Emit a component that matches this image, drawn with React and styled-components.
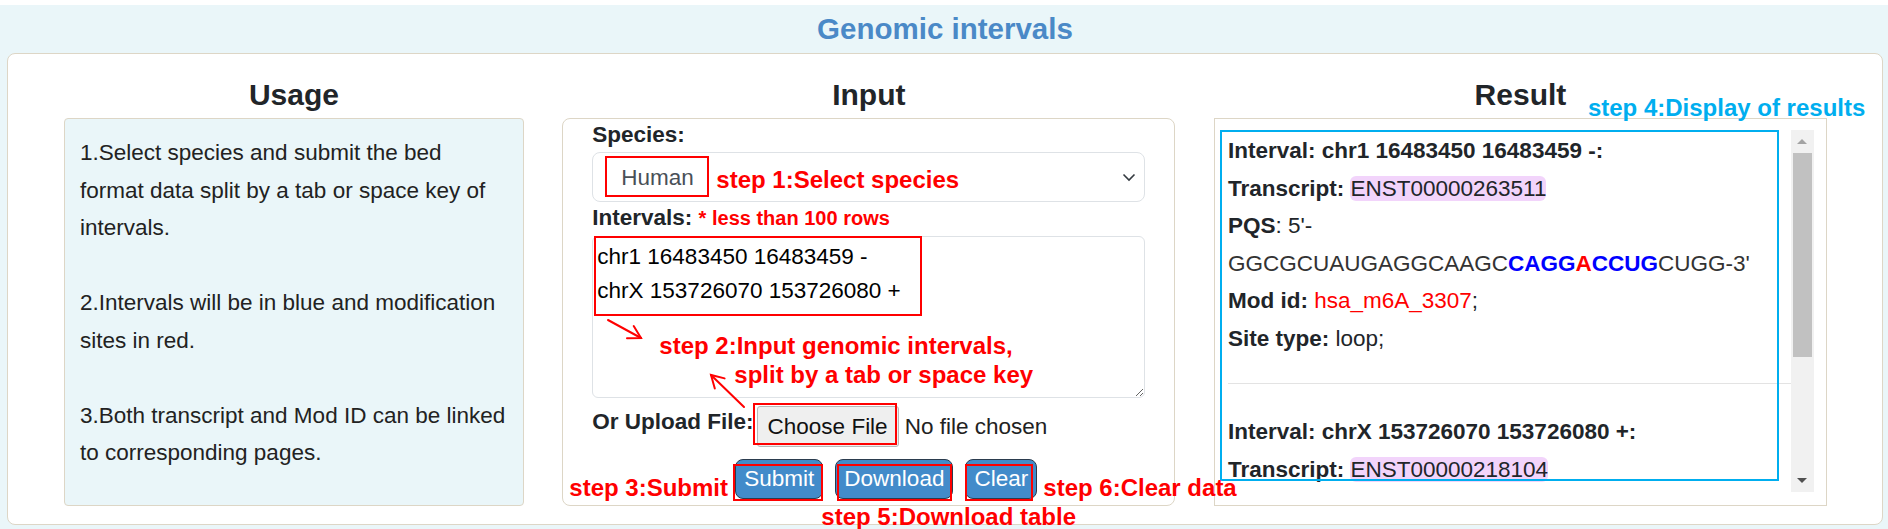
import React from "react";
import styled, { createGlobalStyle } from "styled-components";

const GlobalStyle = createGlobalStyle`
  * { box-sizing: border-box; }
  html, body { overflow: hidden; }
  body {
    margin: 0;
    background: #fff;
    font-family: "Liberation Sans", Arial, sans-serif;
    color: #212529;
  }
`;

const Page = styled.div`
  padding-top: 5px;
`;

const Shell = styled.div`
  background: #eaf6f9;
  padding: 0 5px 4px 7px;
`;

const Title = styled.h2`
  margin: 0;
  height: 48px;
  display: flex;
  align-items: center;
  justify-content: center;
  font-size: 29.5px;
  font-weight: 700;
  color: #4a89c7;
`;

const Panel = styled.div`
  background: #fff;
  border: 1px solid #ddd6c6;
  border-radius: 8px;
  padding: 23px 55px 18px 56px;
  display: grid;
  grid-template-columns: 3fr 4fr 4fr;
  column-gap: 38.5px;
`;

const Column = styled.section`
  display: flex;
  flex-direction: column;
  min-width: 0;
`;

const Heading = styled.h3`
  margin: 0 0 5px;
  font-size: 30px;
  line-height: 36px;
  font-weight: 700;
  text-align: center;
  color: #212529;
`;

const UsageBox = styled.div`
  flex: 1;
  background: #eaf6f9;
  border: 1px solid #ddd6c6;
  border-radius: 4px;
  padding: 15px;
  font-size: 22.5px;
  line-height: 37.5px;
  color: #222;

  p {
    margin: 0 0 37.5px;
  }
  p:last-child {
    margin-bottom: 0;
  }
`;

const InputBox = styled.div`
  flex: 1;
  position: relative;
  display: flex;
  flex-direction: column;
  border: 1px solid #ddd6c6;
  border-radius: 8px;
  padding: 3px 29px 6px;
`;

const FieldLabel = styled.label`
  display: block;
  margin-top: ${(p) => p.$gap || 0}px;
  font-size: 22.5px;
  line-height: 26px;
  font-weight: 700;
  color: #212529;
`;

const Note = styled.span`
  font-size: 20px;
  color: #ff0000;
`;

const SelectWrap = styled.div`
  position: relative;
  margin-top: 4px;
`;

const Select = styled.select`
  appearance: none;
  width: 100%;
  height: 50px;
  border: 1px solid #dee2e6;
  border-radius: 8px;
  background: #fff;
  padding: 0 0 0 28px;
  font: 22.5px "Liberation Sans", Arial, sans-serif;
  color: #495057;
`;

const Chevron = styled.svg`
  position: absolute;
  right: 9px;
  top: 21px;
  pointer-events: none;
`;

const IntervalArea = styled.textarea`
  display: block;
  margin-top: 5px;
  width: 100%;
  height: 162px;
  border: 1px solid #dee2e6;
  border-radius: 6px;
  padding: 3px 4px;
  font: 22.5px/34px "Liberation Sans", Arial, sans-serif;
  color: #000;
  resize: vertical;
`;

const UploadRow = styled.div`
  margin-top: 8px;
  display: flex;
  align-items: flex-start;
  gap: 3px;
`;

const UploadLabel = styled.span`
  flex-shrink: 0;
  white-space: nowrap;
  padding-top: 3px;
  font-size: 22.5px;
  line-height: 26px;
  font-weight: 700;
`;

const FileInput = styled.input`
  flex: 1;
  min-width: 0;
  font: 22.5px/26px "Liberation Sans", Arial, sans-serif;
  color: #222;

  &::file-selector-button {
    font: inherit;
    height: 41px;
    padding: 0 10px;
    margin-right: 6px;
    background: #efefef;
    border: 1px solid #b8b8b8;
    border-radius: 3px;
    color: #111;
  }
`;

const ButtonRow = styled.div`
  margin-top: 12px;
  display: flex;
  gap: 12px;
  padding-left: 143px;
`;

const ActionButton = styled.button`
  height: 40px;
  padding: 0 8px;
  background: #428bca;
  color: #fff;
  border: 1px solid #2b3c4e;
  border-radius: 8px;
  font: 22.5px "Liberation Sans", Arial, sans-serif;
`;

const ResultBox = styled.div`
  flex: 1;
  position: relative;
  display: flex;
  align-items: flex-start;
  border: 1px solid #ddd6c6;
  padding: 11px 12px 12px 11px;
  background: #fff;
`;

const ResultScroll = styled.div`
  flex: 1;
  min-width: 0;
  height: 362px;
  overflow: hidden;
  padding: 2px 0 0 2px;
  font-size: 22.5px;
  line-height: 37.5px;
  color: #212529;
`;

/* classic scrollbar rail next to the result list */
const ScrollRail = styled.div`
  width: 23px;
  height: 362px;
  display: flex;
  flex-direction: column;
  background: #f1f1f1;
`;

const RailButton = styled.div`
  height: 23px;
  display: flex;
  align-items: center;
  justify-content: center;
`;

const Triangle = styled.span`
  width: 0;
  height: 0;
  border-left: 5px solid transparent;
  border-right: 5px solid transparent;
  ${(p) =>
    p.$down
      ? "border-top: 5px solid #505050;"
      : "border-bottom: 5px solid #a3a3a3;"}
`;

const RailTrack = styled.div`
  flex: 1;
  padding: 0 2px;
`;

const RailThumb = styled.div`
  height: 204px;
  background: #c1c1c1;
`;

const Line = styled.div`
  white-space: normal;
`;

const Tag = styled.span`
  background: #f2d4fb;
  border-radius: 6px;
`;

const ModLink = styled.a`
  color: #ff0000;
  text-decoration: none;
`;

const Seq = styled.span`
  color: #333;
`;

const Base = styled.b`
  color: ${(p) => (p.$site ? "#ff0000" : "#0000ff")};
`;

const Divider = styled.hr`
  margin: 26px 0 29px;
  border: 0;
  border-top: 1px solid #e3e3e3;
`;

/* hand-drawn guide marks laid over the form */
const Frame = styled.div`
  position: absolute;
  left: ${(p) => p.$x}px;
  top: ${(p) => p.$y}px;
  width: ${(p) => p.$w}px;
  height: ${(p) => p.$h}px;
  border: 2px solid ${(p) => p.$color || "#ff0000"};
  pointer-events: none;
`;

const Callout = styled.div`
  position: absolute;
  left: ${(p) => p.$x}px;
  top: ${(p) => p.$y}px;
  white-space: nowrap;
  font-size: 24px;
  line-height: 28px;
  font-weight: 700;
  color: ${(p) => p.$color || "#ff0000"};
  pointer-events: none;
  z-index: 2;
`;

const ArrowLayer = styled.svg`
  position: absolute;
  left: 0;
  top: 0;
  width: 100%;
  height: 100%;
  overflow: visible;
  pointer-events: none;
`;

const records = [
  {
    interval: "chr1 16483450 16483459 -",
    transcript: "ENST00000263511",
    head: "GGCGCUAUGAGGCAAGC",
    left: "CAGG",
    site: "A",
    right: "CCUG",
    tail: "CUGG-3'",
    mod: "hsa_m6A_3307",
    type: "loop",
  },
  {
    interval: "chrX 153726070 153726080 +",
    transcript: "ENST00000218104",
    head: "GGAGCUGGCAGGAC",
    left: "UGGG",
    site: "A",
    right: "CUGG",
    tail: "AGGG-3'",
    mod: "hsa_m6A_51482",
    type: "loop",
  },
];

function Record({ r }) {
  return (
    <div>
      <Line>
        <b>Interval: {r.interval}:</b>
      </Line>
      <Line>
        <b>Transcript:</b> <Tag>{r.transcript}</Tag>
      </Line>
      <Line>
        <b>PQS</b>: 5'-<wbr />
        <Seq>
          {r.head}
          <Base>{r.left}</Base>
          <Base $site>{r.site}</Base>
          <Base>{r.right}</Base>
          {r.tail}
        </Seq>
      </Line>
      <Line>
        <b>Mod id:</b> <ModLink href="#">{r.mod}</ModLink>;
      </Line>
      <Line>
        <b>Site type:</b> {r.type};
      </Line>
      <Divider />
    </div>
  );
}

export default function App() {
  return (
    <Page>
      <GlobalStyle />
      <Shell>
        <Title>Genomic intervals</Title>
        <Panel>
          <Column>
            <Heading>Usage</Heading>
            <UsageBox>
              <p>
                1.Select species and submit the bed format data split by a tab or
                space key of intervals.
              </p>
              <p>2.Intervals will be in blue and modification sites in red.</p>
              <p>3.Both transcript and Mod ID can be linked to corresponding pages.</p>
            </UsageBox>
          </Column>

          <Column>
            <Heading>Input</Heading>
            <InputBox>
              <FieldLabel>Species:</FieldLabel>
              <SelectWrap>
                <Select defaultValue="human">
                  <option value="human">Human</option>
                  <option value="mouse">Mouse</option>
                </Select>
                <Chevron width="14" height="9" viewBox="0 0 14 9">
                  <polyline
                    points="1.5,1.5 7,7 12.5,1.5"
                    fill="none"
                    stroke="#343a40"
                    strokeWidth="1.6"
                  />
                </Chevron>
              </SelectWrap>
              <FieldLabel $gap={3}>
                Intervals: <Note>* less than 100 rows</Note>
              </FieldLabel>
              <IntervalArea
                defaultValue={"chr1 16483450 16483459 -\nchrX 153726070 153726080 +"}
              />
              <UploadRow>
                <UploadLabel>Or Upload File:</UploadLabel>
                <FileInput type="file" />
              </UploadRow>
              <ButtonRow>
                <ActionButton>Submit</ActionButton>
                <ActionButton>Download</ActionButton>
                <ActionButton>Clear</ActionButton>
              </ButtonRow>

              <Frame $x={42} $y={37} $w={104} $h={41} />
              <Callout $x={153} $y={47}>step 1:Select species</Callout>
              <Frame $x={31} $y={117} $w={328} $h={80} />
              <ArrowLayer>
                <g fill="none" stroke="#ff0000" strokeWidth="2" strokeLinecap="round">
                  <line x1="45" y1="201" x2="78" y2="219" />
                  <polyline points="70.7,207 78,219 64,219.3" />
                  <line x1="181" y1="288" x2="148" y2="256" />
                  <polyline points="151.8,269.5 148,256 161.6,259.4" />
                </g>
              </ArrowLayer>
              <Callout $x={96} $y={213}>step 2:Input genomic intervals,</Callout>
              <Callout $x={171} $y={242}>split by a tab or space key</Callout>
              <Frame $x={190} $y={284} $w={144} $h={42} />
              <Callout $x={6} $y={355}>step 3:Submit</Callout>
              <Frame $x={170} $y={345} $w={90} $h={37} />
              <Frame $x={274} $y={345} $w={115} $h={37} />
              <Frame $x={402} $y={345} $w={68} $h={37} />
              <Callout $x={480} $y={355}>step 6:Clear data</Callout>
              <Callout $x={258} $y={384}>step 5:Download table</Callout>
            </InputBox>
          </Column>

          <Column>
            <Heading>Result</Heading>
            <ResultBox>
              <ResultScroll>
                {records.map((r) => (
                  <Record key={r.transcript} r={r} />
                ))}
              </ResultScroll>
              <ScrollRail>
                <RailButton>
                  <Triangle />
                </RailButton>
                <RailTrack>
                  <RailThumb />
                </RailTrack>
                <RailButton>
                  <Triangle $down />
                </RailButton>
              </ScrollRail>
              <Frame $x={5} $y={11} $w={559} $h={351} $color="#00aeef" />
              <Callout $x={373} $y={-25} $color="#00aeef">
                step 4:Display of results
              </Callout>
            </ResultBox>
          </Column>
        </Panel>
      </Shell>
    </Page>
  );
}
